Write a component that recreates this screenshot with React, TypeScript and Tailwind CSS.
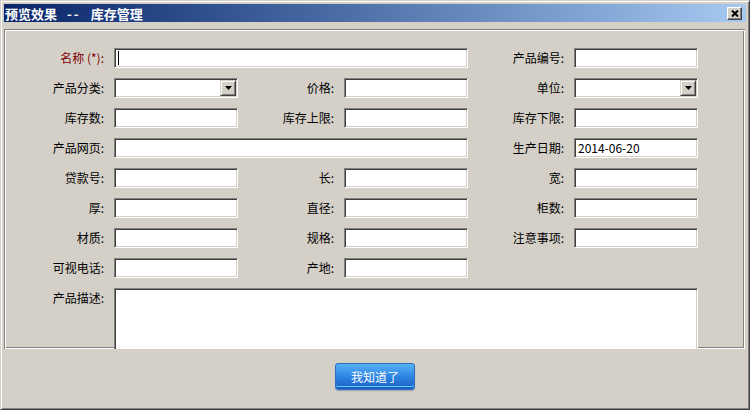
import type { ReactNode } from 'react'

const sunken =
  'bg-white border border-t-[#808080] border-l-[#808080] border-r-white border-b-white shadow-[inset_1px_1px_0_#404040,inset_-1px_-1px_0_#d4d0c8]'

const Label = ({ children, red, top }: { children: ReactNode; red?: boolean; top?: boolean }) => (
  <div
    className={[
      'pr-[10px] text-right text-[12px] leading-[20px] whitespace-pre',
      red ? 'text-[#800000]' : 'text-black',
      top ? 'self-start' : '',
    ].join(' ')}
  >
    {children}
  </div>
)

const Input = ({ span, children }: { span?: string; children?: ReactNode }) => (
  <div className={`${sunken} ${span ?? ''} h-[20px] flex items-center px-[3px] text-[12px] text-black`}>
    {children}
  </div>
)

const Select = () => (
  <div className={`${sunken} h-[20px] flex justify-end p-[1px]`}>
    <div className="w-[16px] h-full flex items-center justify-center bg-[#d4d0c8] border border-t-[#d4d0c8] border-l-[#d4d0c8] border-r-[#404040] border-b-[#404040] shadow-[inset_1px_1px_0_#fff,inset_-1px_-1px_0_#808080]">
      <svg width="7" height="4" viewBox="0 0 7 4">
        <path d="M0 0h7L3.5 4z" fill="#000" />
      </svg>
    </div>
  </div>
)

export default function App() {
  return (
    <div className="w-[750px] h-[410px] flex flex-col bg-[#d4d0c8] p-[3px] border border-t-[#d4d0c8] border-l-[#d4d0c8] border-r-[#404040] border-b-[#404040] shadow-[inset_1px_1px_0_#fff,inset_-1px_-1px_0_#808080] font-['Noto_Sans_CJK_SC',sans-serif]">
      {/* title bar */}
      <div className="h-[18px] flex items-center justify-between bg-linear-to-r from-[#0a246a] to-[#a6caf0] pl-[1px] pr-[4px]">
        <div className="flex items-center gap-[10px] text-[13px] font-bold text-white leading-none">
          <span>预览效果</span>
          <span className="tracking-[2px]">--</span>
          <span>库存管理</span>
        </div>
        <div className="w-[15px] h-[13px] flex items-center justify-center bg-[#d4d0c8] border border-t-white border-l-white border-r-[#404040] border-b-[#404040] shadow-[inset_-1px_-1px_0_#808080]">
          <svg width="8" height="7" viewBox="0 0 8 7">
            <path d="M1 0.5L7 6.5M7 0.5L1 6.5" stroke="#000" strokeWidth="2" />
          </svg>
        </div>
      </div>

      {/* form panel */}
      <div className="mt-[7px] mr-[1px] h-[320px] overflow-hidden pt-[19px] shadow-[inset_1px_1px_0_#808080,inset_-1px_-1px_0_#fff,inset_2px_2px_0_#fff,inset_-2px_-2px_0_#808080]">
        <div className="grid grid-cols-[110px_124px_106px_124px_106px_124px] gap-y-[10px] items-center">
          <Label red>名称 (*):</Label>
          <Input span="col-span-3">
            <span className="w-[1px] h-[14px] bg-black" />
          </Input>
          <Label>产品编号:</Label>
          <Input />

          <Label>产品分类:</Label>
          <Select />
          <Label>价格:</Label>
          <Input />
          <Label>单位:</Label>
          <Select />

          <Label>库存数:</Label>
          <Input />
          <Label>库存上限:</Label>
          <Input />
          <Label>库存下限:</Label>
          <Input />

          <Label>产品网页:</Label>
          <Input span="col-span-3" />
          <Label>生产日期:</Label>
          <Input>2014-06-20</Input>

          <Label>贷款号:</Label>
          <Input />
          <Label>长:</Label>
          <Input />
          <Label>宽:</Label>
          <Input />

          <Label>厚:</Label>
          <Input />
          <Label>直径:</Label>
          <Input />
          <Label>柜数:</Label>
          <Input />

          <Label>材质:</Label>
          <Input />
          <Label>规格:</Label>
          <Input />
          <Label>注意事项:</Label>
          <Input />

          <Label>可视电话:</Label>
          <Input />
          <Label>产地:</Label>
          <Input />
          <div />
          <div />

          <Label top>产品描述:</Label>
          <div className={`${sunken} col-span-5 h-[80px]`} />
        </div>
      </div>

      {/* footer */}
      <div className="flex justify-center pt-[14px]">
        <button className="w-[80px] h-[27px] rounded-[3px] border border-[#2a6fc4] bg-linear-to-b from-[#55b2f5] via-[#2f85e2] to-[#1c5fc4] shadow-[inset_0_-2px_0_#1c5fc4,inset_0_-3px_0_#5fd0fa,0_1px_1px_#9aa3b0] text-[12px] text-white leading-none">
          我知道了
        </button>
      </div>
    </div>
  )
}
